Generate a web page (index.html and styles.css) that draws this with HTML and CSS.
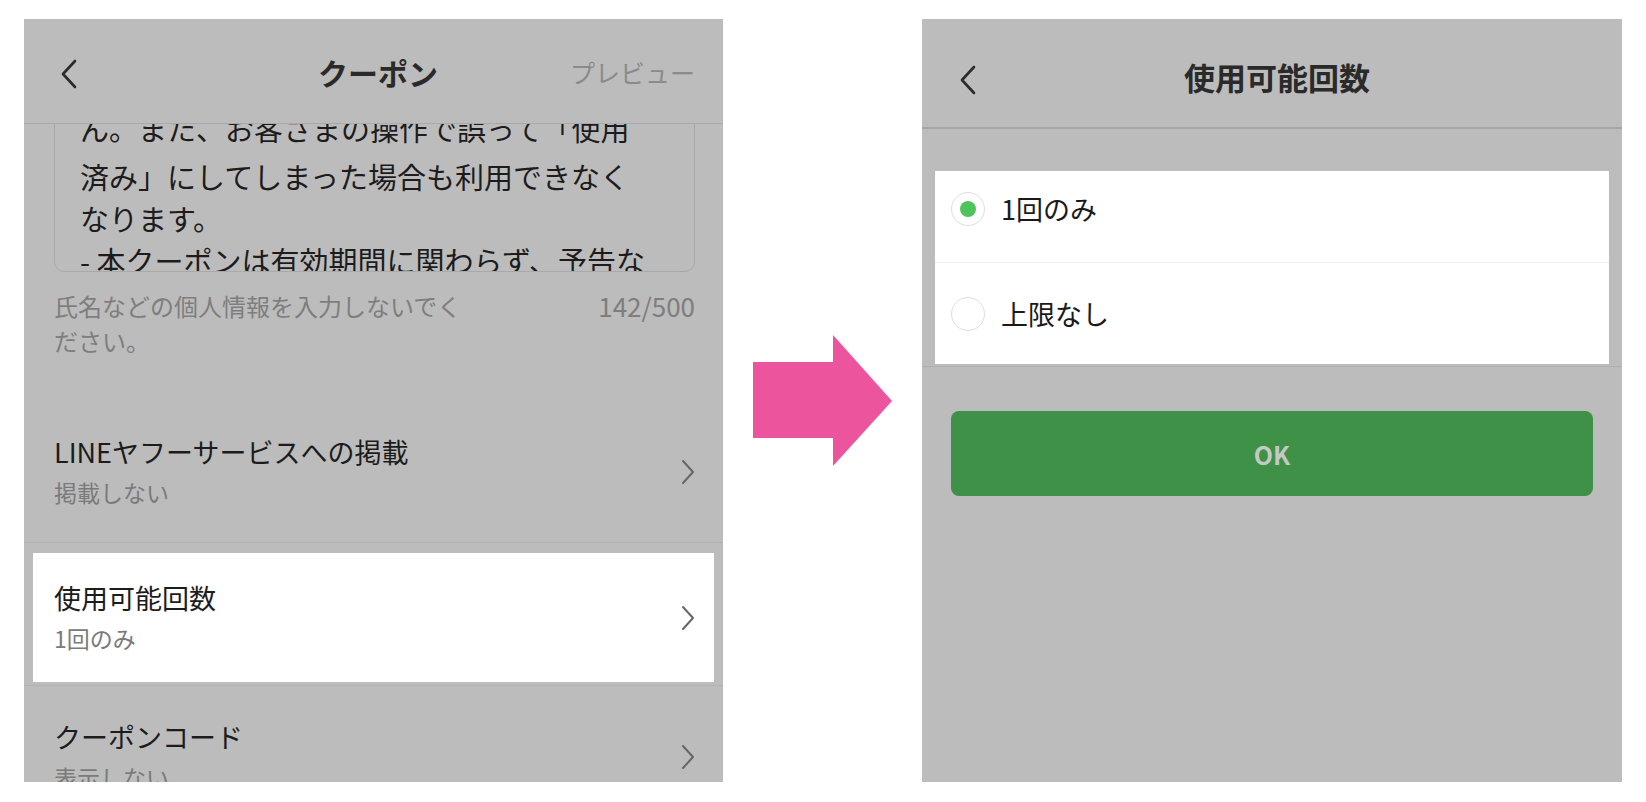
FILE: index.html
```html
<!DOCTYPE html>
<html lang="ja">
<head>
<meta charset="utf-8">
<title>クーポン</title>
<link rel="stylesheet" href="styles.css">
</head>
<body>
<div class="page">
  <section class="phone phone-left">
    <header class="bar bar-left">
      <span class="back">
        <svg width="16" height="30" viewBox="0 0 16 30"><polyline points="14,2 2,15 14,28" fill="none" stroke="#2a2a2a" stroke-width="2.6" stroke-linecap="round" stroke-linejoin="round"/></svg>
      </span>
      <h1 class="title">クーポン</h1>
      <span class="preview">プレビュー</span>
    </header>
    <div class="scroll">
      <div class="memo">
        <p>ん。また、お客さまの操作で誤って「使用</p>
        <p>済み」にしてしまった場合も利用できなく</p>
        <p>なります。</p>
        <p>- 本クーポンは有効期間に関わらず、予告な</p>
      </div>
      <div class="hint">
        <span>氏名などの個人情報を入力しないでく<br>ださい。</span>
        <span class="count">142/500</span>
      </div>
      <div class="rows">
        <div class="row row-first">
          <div class="row-text">
            <div class="row-title">LINEヤフーサービスへの掲載</div>
            <div class="row-sub">掲載しない</div>
          </div>
          <svg class="chev" width="14" height="26" viewBox="0 0 14 26"><polyline points="2,2 12,13 2,24" fill="none" stroke="#666" stroke-width="2" stroke-linecap="round" stroke-linejoin="round"/></svg>
        </div>
        <div class="row row-spot">
          <div class="row-text">
            <div class="row-title">使用可能回数</div>
            <div class="row-sub">1回のみ</div>
          </div>
          <svg class="chev" width="14" height="26" viewBox="0 0 14 26"><polyline points="2,2 12,13 2,24" fill="none" stroke="#666" stroke-width="2" stroke-linecap="round" stroke-linejoin="round"/></svg>
        </div>
        <div class="row row-last">
          <div class="row-text">
            <div class="row-title">クーポンコード</div>
            <div class="row-sub">表示しない</div>
          </div>
          <svg class="chev" width="14" height="26" viewBox="0 0 14 26"><polyline points="2,2 12,13 2,24" fill="none" stroke="#666" stroke-width="2" stroke-linecap="round" stroke-linejoin="round"/></svg>
        </div>
      </div>
    </div>
  </section>

  <div class="arrow">
    <svg width="139" height="131" viewBox="0 0 139 131"><polygon points="0,27 80,27 80,0 139,66 80,131 80,103 0,103" fill="#ec549e"/></svg>
  </div>

  <section class="phone phone-right">
    <header class="bar bar-right">
      <span class="back">
        <svg width="16" height="30" viewBox="0 0 16 30"><polyline points="14,2 2,15 14,28" fill="none" stroke="#2a2a2a" stroke-width="2.6" stroke-linecap="round" stroke-linejoin="round"/></svg>
      </span>
      <h1 class="title title-right">使用可能回数</h1>
      <span></span>
    </header>
    <div class="options">
      <div class="card">
        <div class="option option-first">
          <span class="radio radio-on"></span>
          <span class="option-label">1回のみ</span>
        </div>
        <div class="option option-second">
          <span class="radio"></span>
          <span class="option-label">上限なし</span>
        </div>
      </div>
    </div>
    <div class="ok">OK</div>
  </section>
</div>
</body>
</html>
```

FILE: styles.css
```css
* { box-sizing: border-box; }
html, body { margin: 0; padding: 0; background: #fff; }
body { font-family: "Noto Sans CJK JP", "Noto Sans", sans-serif; }

.page {
  width: 1646px;
  height: 802px;
  display: flex;
  align-items: flex-start;
  padding: 19px 0 0 24px;
  overflow: hidden;
}

.phone {
  height: 763px;
  background: #bcbcbc;
  overflow: hidden;
  display: flex;
  flex-direction: column;
}
.phone-left { width: 699px; }
.phone-right { width: 700px; margin-left: 30px; }

.arrow {
  width: 139px;
  height: 131px;
  margin: 316px 0 0 30px;
}
.arrow svg { display: block; }

.bar {
  flex: none;
  display: grid;
  grid-template-columns: 1fr auto 1fr;
  align-items: center;
}
.bar-left {
  height: 105px;
  border-bottom: 1px solid #a9a9a9;
  padding: 2px 28px 0 37px;
}
.bar-right {
  height: 110px;
  border-bottom: 2px solid #a4a7aa;
  padding: 8px 28px 0 38px;
}
.back svg { display: block; }
.bar-left .back { margin-top: 4px; }
.bar-right .back { margin-top: 6px; }
.title {
  margin: 0;
  font-size: 30px;
  font-weight: 700;
  color: #2a2a2a;
  line-height: 40px;
}
.title-right { font-size: 31px; }
.preview {
  justify-self: end;
  font-size: 25px;
  color: #8a8a8a;
  line-height: 40px;
}

.scroll {
  flex: 1;
  overflow: hidden;
}

.memo {
  margin: -24px 28px 0 30px;
  height: 172px;
  border: 1.5px solid #a9a9a9;
  border-radius: 10px;
  padding: 0 20px 0 25px;
  overflow: hidden;
  font-size: 29px;
  line-height: 42px;
  color: #1c1c1c;
}
.memo p { margin: 0; white-space: nowrap; }
.memo p:first-child { line-height: 54px; }

.hint {
  margin: 16px 28px 0 30px;
  display: flex;
  justify-content: space-between;
  font-size: 24px;
  line-height: 35px;
  color: #7e7e7e;
}
.count { font-size: 26px; }

.rows { margin-top: 43px; }
.row {
  height: 142px;
  display: flex;
  align-items: center;
  justify-content: space-between;
  padding: 0 28px 0 30px;
}
.row-first { border-bottom: 1px solid #b1b1b1; }
.row-spot {
  background: #fff;
  background-clip: padding-box;
  border-style: solid;
  border-color: #bcbcbc;
  border-width: 10px 9px 3px 9px;
  padding: 0 19px 0 21px;
}
.row-last { border-top: 1px solid #b1b1b1; }
.row-title {
  font-size: 27px;
  line-height: 40px;
  color: #1c1c1c;
}
.row-sub {
  font-size: 23px;
  line-height: 40px;
  color: #7a7a7a;
}
.chev { display: block; flex: none; }

.options {
  margin-top: 29px;
  padding: 13px 13px 2px;
  border-bottom: 1px solid #b0b0b0;
}
.card { background: #fff; }
.option {
  display: flex;
  align-items: center;
  padding-left: 16px;
  gap: 16px;
}
.option-first {
  height: 92px;
  padding-bottom: 15px;
  border-bottom: 1px solid #efefef;
}
.option-second { height: 101px; }
.radio {
  width: 34px;
  height: 34px;
  border-radius: 50%;
  border: 1.5px solid #dedede;
  background: #fff;
  display: flex;
  align-items: center;
  justify-content: center;
  flex: none;
}
.radio-on::after {
  content: "";
  width: 16px;
  height: 16px;
  border-radius: 50%;
  background: #4ec55c;
}
.option-label {
  font-size: 27px;
  line-height: 36px;
  color: #1a1a1a;
}

.ok {
  margin: 44px 29px 0;
  height: 85px;
  border-radius: 8px;
  background: #3f9147;
  display: flex;
  align-items: center;
  justify-content: center;
  font-size: 25px;
  font-weight: 700;
  color: #c3cac3;
}
```
